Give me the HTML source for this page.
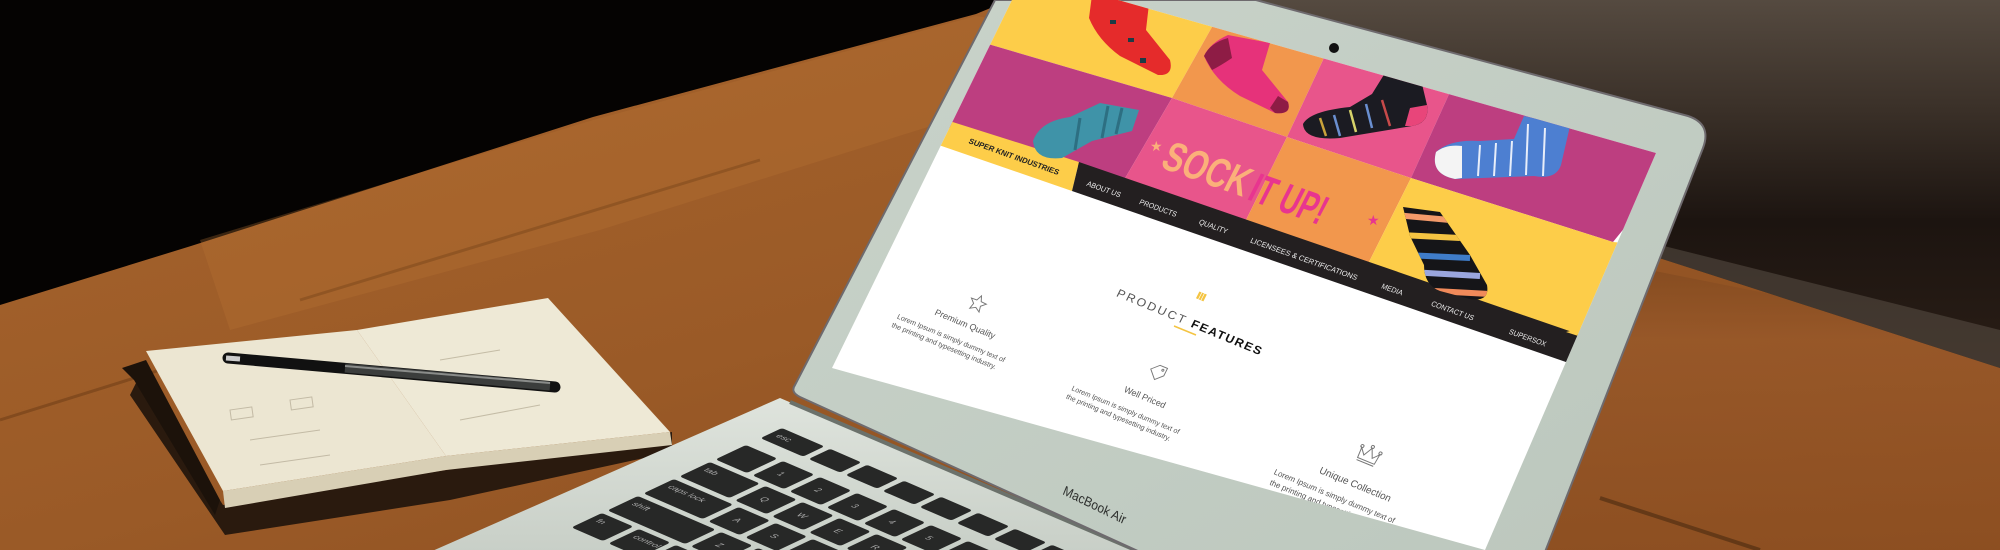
<!DOCTYPE html>
<html><head><meta charset="utf-8"><style>
html,body{margin:0;padding:0;background:#000;width:2000px;height:550px;overflow:hidden;}
svg{display:block}
text{font-family:"Liberation Sans",sans-serif}
</style></head><body>
<svg width="2000" height="550" viewBox="0 0 2000 550" xmlns="http://www.w3.org/2000/svg">
<defs>
<linearGradient id="wood" x1="0" y1="0" x2="1" y2="1">
<stop offset="0" stop-color="#a8652d"/><stop offset="0.5" stop-color="#9a5a27"/><stop offset="1" stop-color="#86491d"/>
</linearGradient>
<linearGradient id="woodR" x1="0" y1="0" x2="0" y2="1">
<stop offset="0" stop-color="#6e3c16"/><stop offset="0.4" stop-color="#99592a"/><stop offset="1" stop-color="#8e5022"/>
</linearGradient>
<linearGradient id="darkR" x1="0" y1="0" x2="0" y2="1">
<stop offset="0" stop-color="#554a40"/><stop offset="0.3" stop-color="#3a3028"/><stop offset="0.6" stop-color="#1c1410"/><stop offset="1" stop-color="#2a1e16"/>
</linearGradient>
<linearGradient id="lid" x1="0" y1="0" x2="1" y2="1">
<stop offset="0" stop-color="#c9d3ca"/><stop offset="1" stop-color="#bcc7bd"/>
</linearGradient>
<linearGradient id="base" x1="0" y1="0" x2="0" y2="1">
<stop offset="0" stop-color="#dfe4dd"/><stop offset="1" stop-color="#c8cfc7"/>
</linearGradient>
<clipPath id="scr"><polygon points="1012,0 1118,0 1656,153 1485,550 832,368"/></clipPath>
<clipPath id="baseclip"><polygon points="780,398 1140,552 430,552"/></clipPath>
<clipPath id="stripe"><path d="M1403,207 L1440,212 L1470,255 L1487,285 Q1490,302 1470,299 L1440,291 Q1424,285 1424,265 L1410,236 Z"/></clipPath>
</defs>

<!-- background -->
<rect width="2000" height="550" fill="url(#wood)"/>
<polygon points="1300,200 2000,340 2000,550 1450,550" fill="url(#woodR)" opacity="0.8"/>
<polygon points="0,0 1010,0 976,14 593,117 191,246 0,305" fill="#050302"/>
<polygon points="200,240 593,120 976,16 1000,20 950,120 600,230 230,330" fill="#b87434" opacity="0.3"/>
<polygon points="1100,0 2000,0 2000,368 1653,256 1600,240" fill="url(#darkR)"/>
<polygon points="1640,240 2000,330 2000,368 1653,256" fill="#5e534a" opacity="0.5"/>
<line x1="1600" y1="498" x2="1760" y2="550" stroke="#4a2a10" stroke-width="4" opacity="0.6"/>
<line x1="0" y1="420" x2="240" y2="345" stroke="#6a3a14" stroke-width="3" opacity="0.5"/>
<line x1="300" y1="300" x2="760" y2="160" stroke="#6a3a14" stroke-width="3" opacity="0.35"/>

<!-- notebook -->
<polygon points="130,395 225,535 450,500 672,452 672,432 446,470 223,505 140,375" fill="#2a1a0e"/>
<polygon points="122,368 134,380 215,515 220,500 146,360" fill="#1c120a"/>
<polygon points="146,351 357,330 446,456 223,491" fill="#ece6d2"/>
<polygon points="357,330 548,298 670,432 446,456" fill="#eee9d6"/>
<polygon points="223,491 446,456 446,470 225,508" fill="#d8cfb5"/>
<polygon points="446,456 670,432 672,445 446,470" fill="#d8cfb5"/>
<g stroke="#b9b09a" stroke-width="1" fill="none" opacity="0.8">
<rect x="230" y="410" width="22" height="10" transform="rotate(-8 230 410)"/>
<rect x="290" y="400" width="22" height="10" transform="rotate(-8 290 400)"/>
<line x1="250" y1="440" x2="320" y2="430"/><line x1="260" y1="465" x2="330" y2="455"/>
<line x1="440" y1="360" x2="500" y2="350"/><line x1="460" y1="420" x2="540" y2="405"/>
</g>
<!-- pen -->
<line x1="228" y1="358" x2="555" y2="387" stroke="#111" stroke-width="11" stroke-linecap="round"/>
<line x1="345" y1="368" x2="550" y2="386" stroke="#3b3d3c" stroke-width="9"/>
<line x1="345" y1="366" x2="550" y2="383" stroke="#8a8c8a" stroke-width="2"/>
<line x1="226" y1="358" x2="240" y2="359" stroke="#ccc" stroke-width="5"/>

<!-- laptop base -->
<polygon points="780,398 1140,552 430,552" fill="url(#base)"/>
<g clip-path="url(#baseclip)">
<g transform="matrix(0.925,0.40,-0.90,0.425,782,428)" fill="#272827">
<rect x="0" y="0" width="46" height="24" rx="3"/>
<g><rect x="52" y="0" width="34" height="24" rx="3"/><rect x="92" y="0" width="34" height="24" rx="3"/><rect x="132" y="0" width="34" height="24" rx="3"/><rect x="172" y="0" width="34" height="24" rx="3"/><rect x="212" y="0" width="34" height="24" rx="3"/><rect x="252" y="0" width="34" height="24" rx="3"/><rect x="292" y="0" width="34" height="24" rx="3"/><rect x="332" y="0" width="34" height="24" rx="3"/><rect x="372" y="0" width="34" height="24" rx="3"/><rect x="412" y="0" width="34" height="24" rx="3"/><rect x="452" y="0" width="34" height="24" rx="3"/><rect x="492" y="0" width="34" height="24" rx="3"/></g>
<g transform="translate(0,40)"><rect x="0" y="0" width="34" height="34" rx="3"/><rect x="40" y="0" width="34" height="34" rx="3"/><rect x="80" y="0" width="34" height="34" rx="3"/><rect x="120" y="0" width="34" height="34" rx="3"/><rect x="160" y="0" width="34" height="34" rx="3"/><rect x="200" y="0" width="34" height="34" rx="3"/><rect x="240" y="0" width="34" height="34" rx="3"/><rect x="280" y="0" width="34" height="34" rx="3"/><rect x="320" y="0" width="34" height="34" rx="3"/><rect x="360" y="0" width="34" height="34" rx="3"/><rect x="400" y="0" width="34" height="34" rx="3"/><rect x="440" y="0" width="34" height="34" rx="3"/></g>
<g transform="translate(0,80)"><rect x="0" y="0" width="54" height="34" rx="3"/><rect x="60" y="0" width="34" height="34" rx="3"/><rect x="100" y="0" width="34" height="34" rx="3"/><rect x="140" y="0" width="34" height="34" rx="3"/><rect x="180" y="0" width="34" height="34" rx="3"/><rect x="220" y="0" width="34" height="34" rx="3"/><rect x="260" y="0" width="34" height="34" rx="3"/><rect x="300" y="0" width="34" height="34" rx="3"/><rect x="340" y="0" width="34" height="34" rx="3"/><rect x="380" y="0" width="34" height="34" rx="3"/><rect x="420" y="0" width="34" height="34" rx="3"/></g>
<g transform="translate(0,120)"><rect x="0" y="0" width="64" height="34" rx="3"/><rect x="70" y="0" width="34" height="34" rx="3"/><rect x="110" y="0" width="34" height="34" rx="3"/><rect x="150" y="0" width="34" height="34" rx="3"/><rect x="190" y="0" width="34" height="34" rx="3"/><rect x="230" y="0" width="34" height="34" rx="3"/><rect x="270" y="0" width="34" height="34" rx="3"/><rect x="310" y="0" width="34" height="34" rx="3"/><rect x="350" y="0" width="34" height="34" rx="3"/><rect x="390" y="0" width="34" height="34" rx="3"/></g>
<g transform="translate(0,160)"><rect x="0" y="0" width="84" height="34" rx="3"/><rect x="90" y="0" width="34" height="34" rx="3"/><rect x="130" y="0" width="34" height="34" rx="3"/><rect x="170" y="0" width="34" height="34" rx="3"/><rect x="210" y="0" width="34" height="34" rx="3"/><rect x="250" y="0" width="34" height="34" rx="3"/><rect x="290" y="0" width="34" height="34" rx="3"/><rect x="330" y="0" width="34" height="34" rx="3"/><rect x="370" y="0" width="34" height="34" rx="3"/></g>
<g transform="translate(0,200)"><rect x="0" y="0" width="34" height="34" rx="3"/><rect x="40" y="0" width="34" height="34" rx="3"/><rect x="80" y="0" width="34" height="34" rx="3"/><rect x="120" y="0" width="40" height="34" rx="3"/><rect x="166" y="0" width="200" height="34" rx="3"/></g>
</g>
<g transform="matrix(0.925,0.40,-0.90,0.425,782,428)" fill="#aaa" font-size="9">
<text x="6" y="14">esc</text><text x="6" y="134">caps lock</text><text x="6" y="94">tab</text><text x="6" y="174">shift</text><text x="6" y="214">fn</text><text x="46" y="214">control</text>
<text x="72" y="100">Q</text><text x="112" y="100">W</text><text x="152" y="100">E</text><text x="192" y="100">R</text>
<text x="82" y="140">A</text><text x="122" y="140">S</text><text x="162" y="140">D</text>
<text x="102" y="180">Z</text><text x="142" y="180">X</text>
<text x="52" y="60">1</text><text x="92" y="60">2</text><text x="132" y="60">3</text><text x="172" y="60">4</text><text x="212" y="60">5</text>
</g>
</g>
<line x1="790" y1="402" x2="1140" y2="552" stroke="#6b716b" stroke-width="4"/>

<!-- lid -->
<path d="M995,0 L1256,0 L1688,116 Q1712,124 1703,148 L1545,552 L1140,552 L800,397 Q790,392 795,385 Z" fill="url(#lid)" stroke="#6e6a6e" stroke-width="2"/>
<circle cx="1334" cy="48" r="5" fill="#111"/>
<text transform="matrix(0.86,0.42,-0.33,0.82,1062,494)" font-size="15" fill="#2d2f2d" textLength="72" lengthAdjust="spacingAndGlyphs">MacBook Air</text>

<!-- screen -->
<polygon points="1012,0 1118,0 1656,153 1485,550 832,368" fill="#ffffff"/>
<g clip-path="url(#scr)">
<polygon points="990,-20 1235,-20 1212,27 1172,98 988,44 960,40" fill="#fdcd49"/>
<polygon points="1235,-20 1340,-20 1323,60 1287,137 1172,98 1212,27" fill="#f2974d"/>
<polygon points="1340,-20 1480,-20 1450,92 1411,178 1287,137 1323,60" fill="#e8558b"/>
<polygon points="1480,-20 1700,-20 1680,160 1613,242 1411,178 1450,92" fill="#bd3e80"/>
<polygon points="960,40 988,44 1172,98 1124,180 940,125" fill="#bd3e80"/>
<polygon points="1172,98 1287,137 1245,222 1124,180" fill="#e8558b"/>
<polygon points="1287,137 1411,178 1368,264 1245,222" fill="#f2974d"/>
<polygon points="1411,178 1613,242 1700,250 1680,350 1566,332 1368,264" fill="#fdcd49"/>
<polygon points="940,118 1079,162 1072,191 930,142" fill="#fdcd49"/>
<polygon points="1079,162 1700,376 1690,405 1072,191" fill="#231f20"/>
<polygon points="1566,332 1700,376 1700,300" fill="#fdcd49"/>
<path d="M1092,-5 L1150,-5 L1146,30 L1170,60 Q1174,76 1158,75 L1120,56 Q1098,40 1089,18 Z" fill="#e52b2b"/>
<g fill="#1d3b45"><rect x="1110" y="20" width="6" height="4"/><rect x="1128" y="38" width="6" height="4"/><rect x="1140" y="58" width="6" height="5"/></g>
<path d="M1228,35 L1270,43 L1262,70 L1288,102 Q1292,115 1275,113 L1240,96 Q1214,80 1204,56 Q1210,43 1228,35 Z" fill="#e6327a"/>
<path d="M1204,56 Q1210,43 1228,38 L1232,58 Q1220,66 1212,70 Z" fill="#8e1c45"/>
<path d="M1275,113 Q1292,115 1288,102 L1278,96 L1270,108 Z" fill="#8e1c45"/>
<path d="M1385,73 L1422,84 L1427,105 Q1430,123 1412,126 L1340,138 Q1304,141 1303,124 Q1310,111 1350,107 L1372,94 Z" fill="#1b1b22"/>
<g stroke-width="2.5"><line x1="1320" y1="118" x2="1326" y2="136" stroke="#c9a23a"/><line x1="1334" y1="115" x2="1340" y2="136" stroke="#6a8fd0"/><line x1="1350" y1="110" x2="1356" y2="132" stroke="#d7d36a"/><line x1="1366" y1="104" x2="1372" y2="128" stroke="#6a8fd0"/><line x1="1382" y1="100" x2="1390" y2="126" stroke="#c74a4a"/></g>
<path d="M1412,126 Q1430,123 1427,105 L1410,108 L1405,126 Z" fill="#e8457a"/>
<path d="M1524,116 L1570,126 L1561,165 Q1556,180 1534,176 L1455,179 Q1430,174 1436,152 Q1450,139 1480,141 L1514,139 Z" fill="#4d7fd1"/>
<path d="M1455,179 Q1430,174 1436,152 Q1446,144 1462,146 L1462,178 Z" fill="#f4f4f4"/>
<g stroke="#e8eefa" stroke-width="2"><line x1="1480" y1="145" x2="1478" y2="176"/><line x1="1496" y1="143" x2="1494" y2="176"/><line x1="1512" y1="141" x2="1510" y2="176"/><line x1="1528" y1="124" x2="1526" y2="175"/><line x1="1545" y1="128" x2="1543" y2="176"/></g>
<path d="M1100,103 L1139,110 L1132,131 L1092,141 L1062,158 Q1035,161 1033,141 Q1040,121 1070,117 Z" fill="#3f93a8"/>
<g stroke="#2d6f82" stroke-width="3"><line x1="1108" y1="106" x2="1102" y2="138"/><line x1="1122" y1="108" x2="1116" y2="134"/><line x1="1080" y1="118" x2="1075" y2="150"/></g>
<path d="M1403,207 L1440,212 L1470,255 L1487,285 Q1490,302 1470,299 L1440,291 Q1424,285 1424,265 L1410,236 Z" fill="#151518"/>
<g clip-path="url(#stripe)" stroke-width="6">
<line x1="1395" y1="215" x2="1450" y2="220" stroke="#f39a6a"/>
<line x1="1400" y1="235" x2="1460" y2="238" stroke="#f4c442"/>
<line x1="1405" y1="255" x2="1470" y2="258" stroke="#3f7cc8"/>
<line x1="1410" y1="272" x2="1480" y2="276" stroke="#9aa6de"/>
<line x1="1415" y1="290" x2="1490" y2="294" stroke="#f08a5a"/>
</g>
<text transform="matrix(0.598,0.2134,-0.31,0.613,1159,167)" font-family="Liberation Sans Narrow, Liberation Sans, sans-serif" font-weight="bold" font-size="62" fill="#fbb07a" textLength="140" lengthAdjust="spacingAndGlyphs">SOCK</text>
<text transform="matrix(0.598,0.2134,-0.31,0.613,1246,199)" font-family="Liberation Sans Narrow, Liberation Sans, sans-serif" font-weight="bold" font-size="62" fill="#e8358f" textLength="122" lengthAdjust="spacingAndGlyphs">IT UP!</text>
<text x="1150" y="151" font-size="14" fill="#fbb07a">★</text>
<text x="1367" y="225" font-size="14" fill="#e8358f">★</text>
<text transform="matrix(0.598,0.2134,-0.31,0.613,968,143)" font-weight="bold" font-size="11.5" fill="#222" textLength="150" lengthAdjust="spacingAndGlyphs">SUPER KNIT INDUSTRIES</text>
<g font-size="11" fill="#eee">
<text transform="matrix(0.598,0.2134,-0.31,0.613,1086,185.5)">ABOUT US</text>
<text transform="matrix(0.598,0.2134,-0.31,0.613,1138.6,203.8)">PRODUCTS</text>
<text transform="matrix(0.598,0.2134,-0.31,0.613,1198.2,223.8)">QUALITY</text>
<text transform="matrix(0.598,0.2134,-0.31,0.613,1249.6,242.2)" textLength="178" lengthAdjust="spacingAndGlyphs">LICENSEES &amp; CERTIFICATIONS</text>
<text transform="matrix(0.598,0.2134,-0.31,0.613,1380.7,288)">MEDIA</text>
<text transform="matrix(0.598,0.2134,-0.31,0.613,1430.5,305.5)">CONTACT US</text>
<text transform="matrix(0.598,0.2134,-0.31,0.613,1508.2,333.5)">SUPERSOX</text>
</g>
<g transform="matrix(0.62,0.255,-0.31,0.62,1199.7,298.3)"><rect x="-5" y="-9" width="12" height="11" fill="#f4c442"/><line x1="-1" y1="-9" x2="-1" y2="2" stroke="#fff" stroke-width="1"/><line x1="3" y1="-9" x2="3" y2="2" stroke="#fff" stroke-width="1"/></g>
<text transform="matrix(0.62,0.255,-0.31,0.62,1115.6,296)" font-size="17" textLength="234" lengthAdjust="spacingAndGlyphs"><tspan fill="#555" letter-spacing="3">PRODUCT </tspan><tspan fill="#111" font-weight="bold" letter-spacing="2">FEATURES</tspan></text>
<line x1="1174" y1="326" x2="1196" y2="335" stroke="#f4c442" stroke-width="1.5"/>
<g transform="matrix(0.62,0.255,-0.31,0.62,977.8,303.3)" fill="none" stroke="#777" stroke-width="1.4"><path d="M0,-12 L3.5,-4 L12,-3.5 L5.5,2.5 L7.5,11 L0,6.5 L-7.5,11 L-5.5,2.5 L-12,-3.5 L-3.5,-4 Z"/></g>
<text transform="matrix(0.62,0.255,-0.31,0.62,963.8,326.7)" font-size="13" fill="#555" text-anchor="middle">Premium Quality</text>
<text transform="matrix(0.62,0.255,-0.31,0.62,896.5,318.3)" font-size="10.5" fill="#555">Lorem Ipsum is simply dummy text of</text>
<text transform="matrix(0.62,0.255,-0.31,0.62,891,326.7)" font-size="10.5" fill="#555">the printing and typesetting industry.</text>
<g transform="matrix(0.62,0.255,-0.31,0.62,1157.6,373.3)" fill="none" stroke="#777" stroke-width="1.4"><path d="M-12,-2 L-2,-12 L10,-12 L10,0 L0,10 Z"/><circle cx="5" cy="-7" r="1.5"/></g>
<text transform="matrix(0.62,0.255,-0.31,0.62,1143.5,400)" font-size="13" fill="#555" text-anchor="middle">Well Priced</text>
<text transform="matrix(0.62,0.255,-0.31,0.62,1071,390)" font-size="10.5" fill="#555">Lorem Ipsum is simply dummy text of</text>
<text transform="matrix(0.62,0.255,-0.31,0.62,1065.5,398.3)" font-size="10.5" fill="#555">the printing and typesetting industry.</text>
<g transform="matrix(0.694,0.286,-0.347,0.694,1368,456.7)" fill="none" stroke="#777" stroke-width="1.3"><path d="M-12,6 L-13,-8 L-6,0 L0,-12 L6,0 L13,-8 L12,6 Z"/><line x1="-12" y1="9" x2="12" y2="9"/><circle cx="-13" cy="-10" r="2"/><circle cx="0" cy="-14" r="2"/><circle cx="13" cy="-10" r="2"/></g>
<text transform="matrix(0.694,0.286,-0.347,0.694,1353.8,487.3)" font-size="13" fill="#555" text-anchor="middle">Unique Collection</text>
<text transform="matrix(0.694,0.286,-0.347,0.694,1273.2,473.9)" font-size="10.5" fill="#555">Lorem Ipsum is simply dummy text of</text>
<text transform="matrix(0.694,0.286,-0.347,0.694,1269,484.5)" font-size="10.5" fill="#555">the printing and typesetting industry.</text>
</g>
</svg>
</body></html>
